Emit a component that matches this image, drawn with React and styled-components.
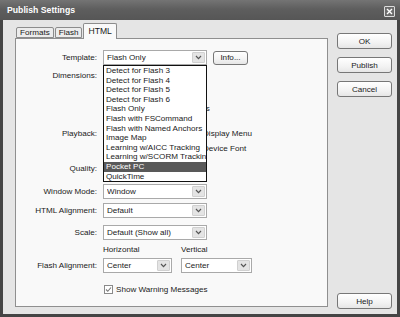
import React from "react";
import styled, { createGlobalStyle } from "styled-components";

const Global = createGlobalStyle`
  html, body { margin: 0; padding: 0; background: #fff; }
  body { font-family: "Liberation Sans", Arial, sans-serif; }
  #root { width: 400px; height: 317px; }
`;

const Window = styled.div`
  width: 400px;
  height: 317px;
  box-sizing: border-box;
  background: #454545;
  display: flex;
  flex-direction: column;
  font-family: "Liberation Sans", Arial, sans-serif;
  font-size: 8.1px;
  color: #1a1a1a;
  overflow: hidden;
`;

const TitleBar = styled.div`
  height: 20px;
  flex: none;
  display: flex;
  align-items: center;
  justify-content: space-between;
  padding: 0 5px 0 7px;
  box-sizing: border-box;
  background: linear-gradient(#747474, #5e5e5e 45%, #565656);
  color: #fff;
  font-weight: bold;
  font-size: 8.7px;
`;

const CloseBox = styled.div`
  width: 11px;
  height: 11px;
  box-sizing: border-box;
  border: 1px solid #dcdcdc;
  border-radius: 1px;
  background: #6c6c6c;
  display: flex;
  align-items: center;
  justify-content: center;
  margin-top: 2px;
`;

const Body = styled.div`
  flex: 1;
  min-height: 0;
  margin: 0 3px 3px;
  background: #e5e5e5;
  display: flex;
  padding: 3px 5px 5px 12px;
  box-sizing: border-box;
`;

const LeftColumn = styled.div`
  flex: 1;
  display: flex;
  flex-direction: column;
  padding-bottom: 2px;
`;

const TabStrip = styled.div`
  height: 15px;
  flex: none;
  display: flex;
  align-items: flex-end;
  gap: 1px;
  padding-left: 1px;
  position: relative;
  z-index: 1;
`;

const Tab = styled.div`
  height: ${(p) => (p.$active ? 16 : 11)}px;
  line-height: ${(p) => (p.$active ? 14 : 10)}px;
  margin-bottom: ${(p) => (p.$active ? -1 : 0)}px;
  padding: 0 ${(p) => (p.$active ? 4 : 3)}px;
  box-sizing: border-box;
  border: 1px solid #8c8c8c;
  border-bottom: ${(p) => (p.$active ? "none" : "1px solid #8c8c8c")};
  border-radius: 2px 2px 0 0;
  background: ${(p) => (p.$active ? "#f9f9f9" : "#ececec")};
  white-space: nowrap;
  font-size: ${(p) => (p.$active ? 8.6 : 8.1)}px;
`;

const Panel = styled.div`
  flex: 1;
  border: 1px solid #8f8f8f;
  background: #f9f9f9;
  padding-top: 11px;
  position: relative;
  display: flex;
  flex-direction: column;
`;

const Row = styled.div`
  display: grid;
  grid-template-columns: 81px 1fr;
  column-gap: 6px;
  align-items: center;
  height: ${(p) => p.$h || 15}px;
  margin-top: ${(p) => p.$mt || 0}px;
  flex: none;
`;

const Label = styled.div`
  text-align: right;
  white-space: nowrap;
`;

const Controls = styled.div`
  display: flex;
  align-items: center;
  gap: ${(p) => p.$gap || 0}px;
  height: 100%;
`;

const Select = styled.div`
  width: ${(p) => p.$w}px;
  height: 15px;
  box-sizing: border-box;
  border: 1px solid #a9a9a9;
  background: #fff;
  display: flex;
  align-items: center;
  padding-left: 3px;
  position: relative;
  flex: none;
`;

const SelectText = styled.span`
  flex: 1;
  white-space: nowrap;
  overflow: hidden;
`;

const ArrowBox = styled.div`
  width: 13px;
  height: 11px;
  margin-right: 1px;
  box-sizing: border-box;
  background: #e4e4e4;
  border: 1px solid #d0d0d0;
  border-radius: 1px;
  display: flex;
  align-items: center;
  justify-content: center;
`;

const DropList = styled.div`
  position: absolute;
  top: calc(100% + 1px);
  left: -1px;
  width: 104px;
  box-sizing: border-box;
  border: 1px solid #111;
  background: #fff;
  z-index: 5;
`;

const ListItem = styled.div`
  height: 9.6px;
  line-height: 9.6px;
  padding-left: 2px;
  white-space: nowrap;
  overflow: hidden;
  background: ${(p) => (p.$selected ? "#595959" : "transparent")};
  color: ${(p) => (p.$selected ? "#fff" : "#1a1a1a")};
`;

const Button = styled.div`
  width: ${(p) => p.$w || 55}px;
  height: ${(p) => p.$h || 16}px;
  box-sizing: border-box;
  border: 1px solid #777;
  border-radius: 3px;
  background: linear-gradient(#ffffff, #f3f3f3 60%, #e6e6e6);
  display: flex;
  align-items: center;
  justify-content: center;
  flex: none;
  margin-left: ${(p) => p.$ml || 0}px;
  margin-top: ${(p) => (p.$bottom ? "auto" : "0")};
`;

const RightColumn = styled.div`
  width: 55px;
  flex: none;
  margin-left: 9px;
  padding-top: 10px;
  display: flex;
  flex-direction: column;
  gap: 8px;
`;

const Box = styled.div`
  width: 9px;
  height: 9px;
  box-sizing: border-box;
  border: 1px solid #8a8a8a;
  background: #fff;
  display: flex;
  align-items: center;
  justify-content: center;
  flex: none;
`;

const CheckItem = styled.div`
  display: flex;
  align-items: center;
  gap: ${(p) => p.$gap || 3}px;
  white-space: nowrap;
  margin-left: ${(p) => p.$ml || 0}px;
`;

const TwoCol = styled.div`
  display: grid;
  grid-template-columns: 88px auto;
  align-items: center;
`;

const Input = styled.div`
  width: 36px;
  height: 13px;
  box-sizing: border-box;
  border: 1px solid #a9a9a9;
  background: #fff;
  flex: none;
`;

const ColLabel = styled.span`
  width: ${(p) => p.$w || "auto"};
  margin-left: ${(p) => p.$ml || 0}px;
  white-space: nowrap;
`;

const Chevron = () => (
  <svg width="7" height="5" viewBox="0 0 7 5">
    <polyline points="1,1 3.5,3.6 6,1" fill="none" stroke="#555" strokeWidth="1.2" />
  </svg>
);

const Check = ({ checked }) => (
  <Box>
    {checked && (
      <svg width="7" height="7" viewBox="0 0 7 7">
        <polyline points="1,3.5 2.8,5.3 6,1.5" fill="none" stroke="#777" strokeWidth="1.1" />
      </svg>
    )}
  </Box>
);

const Drop = ({ w, value, children }) => (
  <Select $w={w}>
    <SelectText>{value}</SelectText>
    <ArrowBox>
      <Chevron />
    </ArrowBox>
    {children}
  </Select>
);

const templates = [
  "Detect for Flash 3",
  "Detect for Flash 4",
  "Detect for Flash 5",
  "Detect for Flash 6",
  "Flash Only",
  "Flash with FSCommand",
  "Flash with Named Anchors",
  "Image Map",
  "Learning w/AICC Tracking",
  "Learning w/SCORM Tracking",
  "Pocket PC",
  "QuickTime",
];

export default function App() {
  return (
    <>
      <Global />
      <Window>
        <TitleBar>
          <span>Publish Settings</span>
          <CloseBox>
            <svg width="7" height="7" viewBox="0 0 7 7">
              <path d="M1 1 L6 6 M6 1 L1 6" stroke="#fff" strokeWidth="1.4" />
            </svg>
          </CloseBox>
        </TitleBar>
        <Body>
          <LeftColumn>
            <TabStrip>
              <Tab>Formats</Tab>
              <Tab>Flash</Tab>
              <Tab $active>HTML</Tab>
            </TabStrip>
            <Panel>
              <Row>
                <Label>Template:</Label>
                <Controls>
                  <Drop w={104} value="Flash Only">
                    <DropList>
                      {templates.map((t) => (
                        <ListItem key={t} $selected={t === "Pocket PC"}>
                          {t}
                        </ListItem>
                      ))}
                    </DropList>
                  </Drop>
                  <Button $w={35} $h={14} $ml={6}>Info...</Button>
                </Controls>
              </Row>
              <Row $mt={3}>
                <Label>Dimensions:</Label>
                <Controls>
                  <Drop w={104} value="" />
                </Controls>
              </Row>
              <Row $mt={2} $h={12}>
                <Label />
                <Controls />
              </Row>
              <Row $mt={4}>
                <Label />
                <Controls $gap={4}>
                  <Input />
                  <Input />
                  <ColLabel $ml={6}>pixels</ColLabel>
                </Controls>
              </Row>
              <Row $mt={10}>
                <Label>Playback:</Label>
                <TwoCol>
                  <CheckItem>
                    <Check />
                  </CheckItem>
                  <CheckItem>
                    <Check checked />
                    <span>Display Menu</span>
                  </CheckItem>
                </TwoCol>
              </Row>
              <Row>
                <Label />
                <TwoCol>
                  <CheckItem>
                    <Check checked />
                  </CheckItem>
                  <CheckItem>
                    <Check />
                    <span>Device Font</span>
                  </CheckItem>
                </TwoCol>
              </Row>
              <Row $mt={5}>
                <Label>Quality:</Label>
                <Controls>
                  <Drop w={104} value="" />
                </Controls>
              </Row>
              <Row $mt={8}>
                <Label>Window Mode:</Label>
                <Controls>
                  <Drop w={104} value="Window" />
                </Controls>
              </Row>
              <Row $mt={4}>
                <Label>HTML Alignment:</Label>
                <Controls>
                  <Drop w={104} value="Default" />
                </Controls>
              </Row>
              <Row $mt={7}>
                <Label>Scale:</Label>
                <Controls>
                  <Drop w={104} value="Default (Show all)" />
                </Controls>
              </Row>
              <Row $mt={3} $h={12}>
                <Label />
                <Controls>
                  <ColLabel $w="78px">Horizontal</ColLabel>
                  <ColLabel>Vertical</ColLabel>
                </Controls>
              </Row>
              <Row $mt={3}>
                <Label>Flash Alignment:</Label>
                <Controls $gap={9}>
                  <Drop w={69} value="Center" />
                  <Drop w={71} value="Center" />
                </Controls>
              </Row>
              <Row $mt={9} $h={14}>
                <Label />
                <Controls>
                  <CheckItem $ml={1} $gap={3}>
                    <Check checked />
                    <span>Show Warning Messages</span>
                  </CheckItem>
                </Controls>
              </Row>
            </Panel>
          </LeftColumn>
          <RightColumn>
            <Button>OK</Button>
            <Button>Publish</Button>
            <Button>Cancel</Button>
            <Button $bottom>Help</Button>
          </RightColumn>
        </Body>
      </Window>
    </>
  );
}
